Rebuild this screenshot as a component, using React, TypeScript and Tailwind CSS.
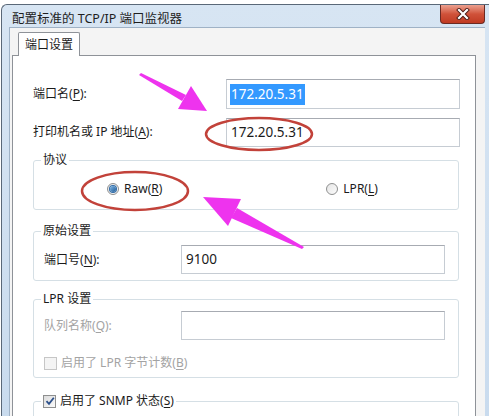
import type { ReactNode } from 'react'

const FONT = '"Noto Sans", "Noto Sans CJK SC", sans-serif'

function Mn({ k }: { k: string }) {
  return (
    <>
      (<span className="underline underline-offset-2">{k}</span>)
    </>
  )
}

function TextBox({ value, selected, className }: { value?: string; selected?: boolean; className: string }) {
  return (
    <div
      className={`flex items-center border border-[#c6ccd3] border-t-[#a7abb2] bg-white pl-[3px] text-[13.5px] ${className}`}
    >
      {value ? (
        <span className={selected ? 'bg-[#3399ff] px-[1px] text-white leading-[21px]' : 'px-[1px] text-[#1b1b1b]'}>
          {value}
        </span>
      ) : null}
    </div>
  )
}

function Radio({ checked }: { checked?: boolean }) {
  return (
    <span className="flex h-[12px] w-[12px] items-center justify-center rounded-full border border-[#8e8f8f] bg-gradient-to-br from-[#e6e6e6] to-[#fbfbfb]">
      {checked ? (
        <span className="h-[6px] w-[6px] rounded-full bg-gradient-to-br from-[#7fb7e6] to-[#1c5a96] ring-1 ring-[#2f6aa6]" />
      ) : null}
    </span>
  )
}

function Check({ checked, disabled }: { checked?: boolean; disabled?: boolean }) {
  return (
    <span
      className={`flex h-[13px] w-[13px] items-center justify-center border ${
        disabled ? 'border-[#c6c6c6] bg-[#f4f4f4]' : 'border-[#8e8f8f] bg-gradient-to-br from-[#dcdcdc] to-[#fafafa]'
      }`}
    >
      {checked ? (
        <svg width="10" height="10" viewBox="0 0 10 10">
          <path d="M1.5 5.2 L4 7.8 L8.8 1.8" fill="none" stroke="#2b4f8a" strokeWidth="1.8" />
        </svg>
      ) : null}
    </span>
  )
}

function Group({ legend, children, className }: { legend: ReactNode; children?: ReactNode; className: string }) {
  return (
    <fieldset className={`mr-[16px] rounded-[3px] border border-[#d5dfe5] ${className}`}>
      <legend className="ml-[7px] px-[2px] text-[12px] leading-[16px]">{legend}</legend>
      {children}
    </fieldset>
  )
}

function Annotations() {
  return (
    <svg className="pointer-events-none absolute inset-0" width="489" height="416" viewBox="0 0 489 416">
      {/* arrow pointing to port name */}
      <polygon points="139,75 141,73 186,95 182,101" fill="#ee33ee" />
      <polygon points="207,111 178,109 191,86" fill="#ee33ee" />
      {/* arrow pointing to Raw */}
      <polygon points="304,247 302,249 231,218 237,208" fill="#ee33ee" />
      <polygon points="203,197 241,199 228,226" fill="#ee33ee" />
      <ellipse cx="259" cy="134" rx="53" ry="16" fill="none" stroke="#c2423a" strokeWidth="2.5" />
      <ellipse cx="135" cy="191" rx="53" ry="19" fill="none" stroke="#c2423a" strokeWidth="2.5" />
    </svg>
  )
}

export default function App() {
  return (
    <div className="relative h-[416px] w-[489px] overflow-hidden bg-white text-[#1b1b1b]" style={{ fontFamily: FONT }}>
      <div className="ml-[1px] mt-[4px] flex h-[412px] w-[492px] flex-col rounded-tl-[6px] border-l border-t border-[#5a6878] bg-gradient-to-b from-[#d7e5f3] to-[#c9dbee]">
        {/* title bar */}
        <div className="flex h-[28px] items-start">
          <div className="pl-[10px] pt-[6px] text-[12.5px] leading-[16px] text-[#1e1e1e]">配置标准的 TCP/IP 端口监视器</div>
          <div className="ml-auto mr-[8px] flex h-[19px] w-[45px] items-center justify-center rounded-b-[4px] border border-t-0 border-[#6b2a23] bg-gradient-to-b from-[#eba08f] via-[#d0523a] to-[#c03a22]">
            <svg width="14" height="12" viewBox="0 0 14 12">
              <path d="M3 2 L11 10 M11 2 L3 10" stroke="#4a1a14" strokeWidth="4" strokeLinecap="square" />
              <path d="M3 2 L11 10 M11 2 L3 10" stroke="#ffffff" strokeWidth="2.2" strokeLinecap="square" />
            </svg>
          </div>
        </div>
        {/* dialog body */}
        <div className="ml-[7px] mr-[8px] flex flex-1 flex-col border-l border-t border-[#9fb2c6] bg-[#f4f4f4] pl-[2px] pr-[9px] pt-[4px]">
          <div className="flex">
            <div className="relative z-10 -mb-px ml-[6px] flex h-[24px] items-center rounded-t-[2px] border border-b-0 border-[#8e9298] bg-white px-[6px] text-[12px]">
              端口设置
            </div>
          </div>
          <div className="flex flex-1 flex-col border border-[#8e9298] bg-white pl-[20px] pt-[23px]">
            <div className="flex h-[30px] items-center">
              <div className="w-[193px] text-[12px]">
                端口名<Mn k="P" />:
              </div>
              <TextBox value="172.20.5.31" selected className="h-[30px] w-[234px]" />
            </div>
            <div className="mt-[9px] flex h-[28px] items-center">
              <div className="w-[193px] text-[12px]">
                打印机名或 IP 地址<Mn k="A" />:
              </div>
              <TextBox value="172.20.5.31" className="h-[29px] w-[234px]" />
            </div>

            <Group legend="协议" className="mt-[6px] h-[58px]">
              <div className="flex h-[26px] items-center pt-[16px]">
                <div className="ml-[73px] flex items-center gap-[5px] text-[12px]">
                  <Radio checked />
                  <span>
                    Raw<Mn k="R" />
                  </span>
                </div>
                <div className="ml-[164px] flex items-center gap-[5px] text-[12px]">
                  <Radio />
                  <span>
                    LPR<Mn k="L" />
                  </span>
                </div>
              </div>
            </Group>

            <Group legend="原始设置" className="mt-[13px] h-[58px]">
              <div className="mt-[6px] flex items-center pl-[10px]">
                <div className="w-[137px] text-[12px]">
                  端口号<Mn k="N" />:
                </div>
                <TextBox value="9100" className="h-[29px] w-[264px]" />
              </div>
            </Group>

            <Group legend="LPR 设置" className="mt-[10px] h-[87px]">
              <div className="mt-[4px] flex items-center pl-[10px]">
                <div className="w-[137px] text-[12px] text-[#a3a3a3]">
                  队列名称<Mn k="Q" />:
                </div>
                <TextBox className="h-[29px] w-[264px]" />
              </div>
              <div className="mt-[14px] flex items-center gap-[4px] pl-[10px] text-[12px] text-[#a3a3a3]">
                <Check disabled />
                <span>
                  启用了 LPR 字节计数<Mn k="B" />
                </span>
              </div>
            </Group>

            <Group
              className="mt-[15px] h-[40px]"
              legend={
                <span className="flex items-center gap-[4px]">
                  <Check checked />
                  <span>
                    启用了 SNMP 状态<Mn k="S" />
                  </span>
                </span>
              }
            />
          </div>
        </div>
      </div>
      <Annotations />
    </div>
  )
}
